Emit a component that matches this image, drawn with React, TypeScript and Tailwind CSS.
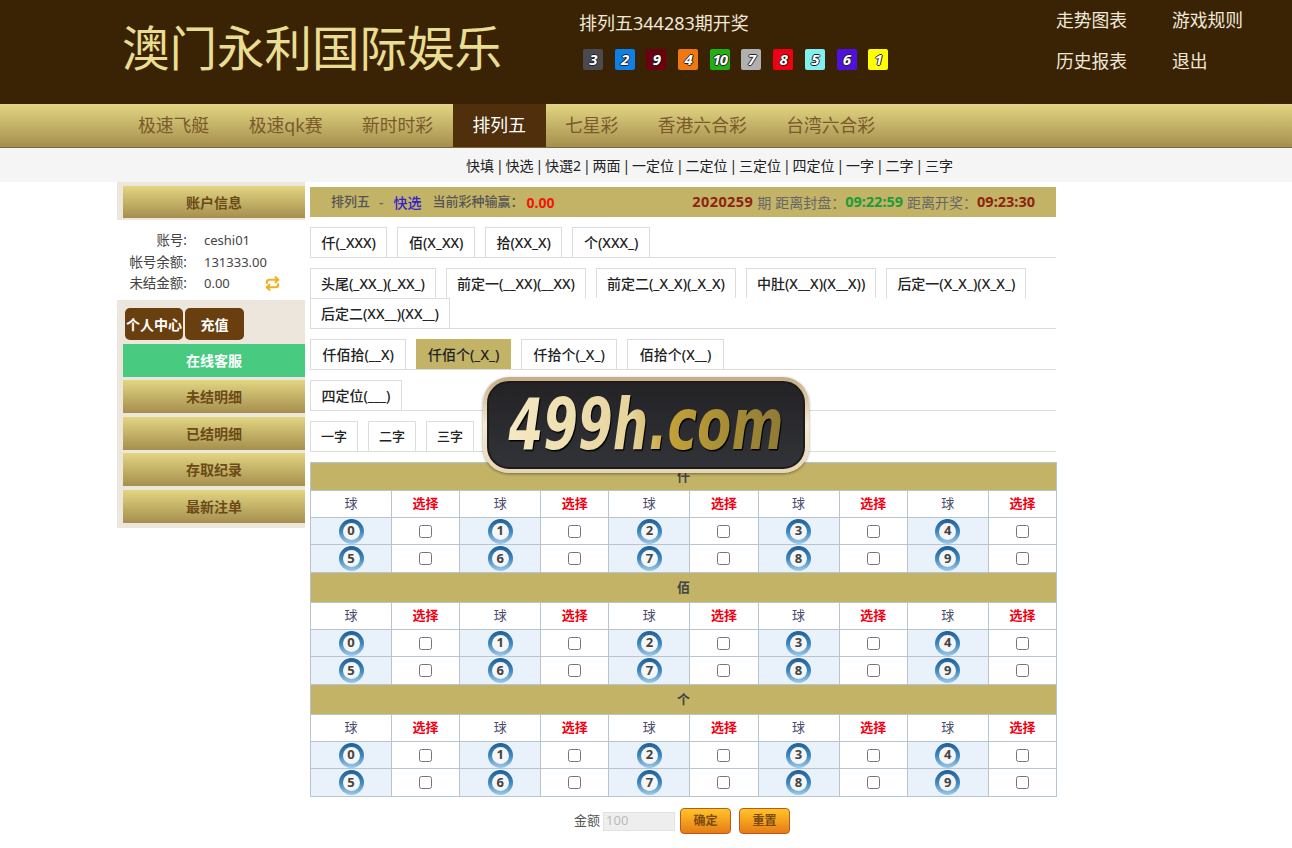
import { Fragment } from "react";
import { Repeat } from "lucide-react";

const chips = [
  { n: 3, c: "bg-[#4a4a50]" },
  { n: 2, c: "bg-[#0a80e8]" },
  { n: 9, c: "bg-[#6a0010]" },
  { n: 4, c: "bg-[#f07810]" },
  { n: 10, c: "bg-[#20b010]" },
  { n: 7, c: "bg-[#b0b0b0]" },
  { n: 8, c: "bg-[#f00010]" },
  { n: 5, c: "bg-[#80f0f0]" },
  { n: 6, c: "bg-[#5010e0]" },
  { n: 1, c: "bg-[#ffff00]" },
];

const navItems = ["极速飞艇", "极速qk赛", "新时时彩", "排列五", "七星彩", "香港六合彩", "台湾六合彩"];
const subNav = ["快填", "快选", "快選2", "两面", "一定位", "二定位", "三定位", "四定位", "一字", "二字", "三字"];
const sideGold = ["未结明细", "已结明细", "存取纪录", "最新注单"];

const tabGroups = [
  { cls: "px-[10.5px] text-[14px]", tabs: ["仟(_XXX)", "佰(X_XX)", "拾(XX_X)", "个(XXX_)"] },
  { cls: "px-[10px] text-[14px]", tabs: ["头尾(_XX_)(_XX_)", "前定一(__XX)(__XX)", "前定二(_X_X)(_X_X)", "中肚(X__X)(X__X))", "后定一(X_X_)(X_X_)", "后定二(XX__)(XX__)"] },
  { cls: "px-[11.5px] text-[14px]", tabs: ["仟佰拾(__X)", "仟佰个(_X_)", "仟拾个(_X_)", "佰拾个(X__)"] },
  { cls: "px-[10.5px] text-[14px]", tabs: ["四定位(___)"] },
  { cls: "px-[10px] text-[13px]", tabs: ["一字", "二字", "三字"] },
];

const gold = "bg-gradient-to-b from-[#e2d682] to-[#a68f4e]";

function Ball({ n }: { n: number }) {
  return (
    <div className="mx-auto flex h-[25px] w-[25px] items-center justify-center rounded-full bg-gradient-to-b from-[#1f5f96] via-[#3d87bd] to-[#9ccbea]">
      <div className="flex h-[17px] w-[17px] items-center justify-center rounded-full bg-[#f6f6f6] text-[13px] font-bold text-[#444]">{n}</div>
    </div>
  );
}

function BallRow({ nums, tall }: { nums: number[]; tall?: boolean }) {
  return (
    <tr className={tall ? "h-[28px]" : "h-[27px]"}>
      {nums.map((n) => (
        <Fragment key={n}>
          <td className="border border-[#b9c4d1] bg-[#e9f1fb] p-0">
            <Ball n={n} />
          </td>
          <td className="border border-[#b9c4d1] bg-white p-0 text-center">
            <input type="checkbox" className="mx-auto block" />
          </td>
        </Fragment>
      ))}
    </tr>
  );
}

function Section({ title, first }: { title: string; first?: boolean }) {
  return (
    <>
      <tr className={first ? "h-[28px]" : "h-[30px]"}>
        <td colSpan={10} className="border border-[#b9c4d1] bg-[#c2b366] p-0 text-center text-[13px] font-bold text-[#444]">
          {title}
        </td>
      </tr>
      <tr className="h-[27px]">
        {[0, 1, 2, 3, 4].map((i) => (
          <Fragment key={i}>
            <td className="border border-[#b9c4d1] bg-white p-0 text-center text-[13px] text-[#4a4a6a]">球</td>
            <td className="border border-[#b9c4d1] bg-white p-0 text-center text-[13px] font-bold text-[#f00010]">选择</td>
          </Fragment>
        ))}
      </tr>
      <BallRow nums={[0, 1, 2, 3, 4]} />
      <BallRow nums={[5, 6, 7, 8, 9]} tall />
    </>
  );
}

export default function App() {
  return (
    <div className="relative min-h-[848px] bg-white font-['Noto_Sans','Noto_Sans_CJK_SC',sans-serif] text-[#333]">
      {/* 顶部 */}
      <header className="flex h-[104px] bg-[#3a2305]">
        <h1 className="ml-[122px] mt-[16px] w-[457px] text-[47.5px] leading-[64px] font-normal text-[#e9dd92]">澳门永利国际娱乐</h1>
        <div className="w-[477px] pt-[10px]">
          <p className="text-[18px] leading-[26px] text-[#efe8d8]">排列五344283期开奖</p>
          <div className="mt-[13px] ml-[4px] flex gap-[11.7px]">
            {chips.map((c) => (
              <span
                key={c.n}
                className={`${c.c} flex h-[21px] w-[20px] items-center justify-center rounded-[2px] text-[15px] font-bold italic tracking-[-1px] text-white [text-shadow:-1px_0_#222,1px_0_#222,0_-1px_#222,0_1px_#222]`}
              >
                {c.n}
              </span>
            ))}
          </div>
        </div>
        <div className="grid h-fit grid-cols-[116px_auto] gap-y-[15px] pt-[7px] text-[17.8px] leading-[26px] text-[#efe8d8]">
          <span>走势图表</span>
          <span>游戏规则</span>
          <span>历史报表</span>
          <span>退出</span>
        </div>
      </header>

      {/* 彩种导航 */}
      <nav className={`flex h-[44px] border-b border-[#7d6738] pl-[118px] text-[17.8px] ${gold}`}>
        {navItems.map((item) => (
          <a
            key={item}
            className={
              item === "排列五"
                ? "mr-[-1px] flex items-center bg-[#4f2f0c] px-5 text-white"
                : "mr-[-0.5px] flex items-center px-5 text-[#7a5a2a]"
            }
          >
            {item}
          </a>
        ))}
      </nav>

      <div className="flex h-[34px] items-center bg-[#f5f5f5] pl-[466px] text-[14px] text-[#222]">
        {subNav.map((item, i) => (
          <Fragment key={item}>
            {i > 0 && <span className="mx-[1.9px]">|</span>}
            <span>{item}</span>
          </Fragment>
        ))}
      </div>

      <div className="flex pl-[117px]">
        {/* 左侧 */}
        <aside className="w-[188px] shrink-0">
          <div className="bg-[#ece6dd] pt-[4px] pb-[2px] pl-[6px]">
            <div className={`flex h-[32px] items-center justify-center text-[14px] font-bold text-[#6b4a18] ${gold}`}>账户信息</div>
          </div>
          <div className="h-[80px] pt-[10px] text-[13px] leading-[21.5px] text-[#444]">
            <div className="flex">
              <span className="w-[70px] text-right text-[13.5px]">账号:</span>
              <span className="ml-[17px]">ceshi01</span>
            </div>
            <div className="flex">
              <span className="w-[70px] text-right text-[13.5px]">帐号余额:</span>
              <span className="ml-[17px]">131333.00</span>
            </div>
            <div className="flex items-center">
              <span className="w-[70px] text-right text-[13.5px]">未结金额:</span>
              <span className="ml-[17px]">0.00</span>
              <Repeat className="ml-[35px] h-[15px] w-[15px] text-[#f0b020]" strokeWidth={3.5} />
            </div>
          </div>
          <div className="h-[228px] bg-[#ece6dd] pl-[6px] pt-[8px]">
            <div className="flex gap-[2px] pl-[2px]">
              <div className="flex h-[32px] w-[58px] items-center justify-center rounded-[5px] bg-[#693f10] text-[14px] font-bold text-white">个人中心</div>
              <div className="flex h-[32px] w-[59px] items-center justify-center rounded-[5px] bg-[#693f10] text-[14px] font-bold text-white">充值</div>
            </div>
            <div className="mt-[4px] flex h-[33px] items-center justify-center bg-[#48cb80] text-[14px] font-bold text-white">在线客服</div>
            <div className="mt-[3px] flex flex-col gap-[3.6px]">
              {sideGold.map((item) => (
                <div key={item} className={`flex h-[33px] items-center justify-center text-[14px] font-bold text-[#6b4a18] ${gold}`}>
                  {item}
                </div>
              ))}
            </div>
          </div>
        </aside>

        {/* 主区 */}
        <main className="ml-[5px] w-[747px] pt-[5px]">
          <div className="flex h-[30px] w-[746px] items-center justify-between bg-[#c2b366] px-[21px] text-[14px] text-[#666]">
            <div className="flex items-center font-medium">
              <span className="text-[13px] text-[#555]">排列五</span>
              <span className="mx-[9px]">-</span>
              <span className="ml-px text-[#3322cc]">快选</span>
              <span className="ml-[11px] text-[13px] text-[#555]">当前彩种输赢：</span>
              <span className="ml-[3px] font-bold text-[#f01808]">0.00</span>
            </div>
            <div className="flex items-center">
              <span className="text-[14.5px] font-bold tracking-[0.4px] text-[#8e2410]">2020259</span>
              <span className="ml-[4px]">期</span>
              <span className="ml-[4px]">距离封盘：</span>
              <span className="text-[14.5px] font-bold text-[#1f9a3a]">09:22:59</span>
              <span className="ml-[4px]">距离开奖：</span>
              <span className="text-[14.5px] font-bold text-[#8e2410]">09:23:30</span>
            </div>
          </div>

          <div className="mt-[10px] flex flex-col gap-[10px]">
            {tabGroups.map((group, gi) => (
              <div key={gi} className="flex w-[746px] flex-wrap gap-x-[10px] border-b border-[#dcdcdc]">
                {group.tabs.map((tab) => (
                  <button
                    key={tab}
                    type="button"
                    className={
                      tab === "仟佰个(_X_)"
                        ? `h-[30px] bg-[#c2b366] font-medium text-[#222] ${group.cls}`
                        : `h-[30px] border border-b-0 border-[#dcdcdc] bg-white font-medium text-[#222] ${group.cls}`
                    }
                  >
                    {tab}
                  </button>
                ))}
              </div>
            ))}
          </div>

          <table className="mt-[10px] w-[746px] table-fixed border-collapse">
            <colgroup>
              {[0, 1, 2, 3, 4].map((i) => (
                <Fragment key={i}>
                  <col className="w-[81px]" />
                  <col className="w-[68.2px]" />
                </Fragment>
              ))}
            </colgroup>
            <tbody>
              <Section title="仟" first />
              <Section title="佰" />
              <Section title="个" />
            </tbody>
          </table>

          <div className="mt-[11px] flex items-center pl-[264px]">
            <span className="text-[13px] text-[#555]">金额</span>
            <input
              disabled
              placeholder="100"
              className="ml-[3px] h-[19px] w-[72px] border border-[#e2e2e2] bg-[#eeeeee] pl-[2px] text-[13px] placeholder:text-[#bbb]"
            />
            <button type="button" className="ml-[5px] h-[26px] w-[51px] rounded-[4px] border border-[#b85a20] bg-gradient-to-b from-[#ffc428] to-[#e57c14] text-[12px] font-bold text-[#7a4a10]">
              确定
            </button>
            <button type="button" className="ml-[8px] h-[26px] w-[51px] rounded-[4px] border border-[#b85a20] bg-gradient-to-b from-[#ffc428] to-[#e57c14] text-[12px] font-bold text-[#7a4a10]">
              重置
            </button>
          </div>
        </main>
      </div>

      {/* 水印 */}
      <div className="absolute left-[483px] top-[377px] h-[96px] w-[326px] rounded-[26px] bg-gradient-to-b from-[#c4ad84] via-[#f6ead2] to-[#e8d6b2] p-[4px] shadow-[0_1px_3px_rgba(0,0,0,0.4)]">
        <div className="flex h-full w-full items-center justify-center rounded-[22px] border-2 border-[#1c1c1e] bg-gradient-to-b from-[#232326] to-[#323338]">
          <span className="origin-center scale-y-[1.42] bg-[linear-gradient(90deg,#f5e9c4_0%,#e6d49c_45%,#c4a23a_58%,#a68c35_80%,#8f7a35_100%)] bg-clip-text font-['DejaVu_Sans',sans-serif] text-[50px] leading-[56px] font-bold italic text-transparent drop-shadow-[1px_1px_0_#000]">
            499h.com
          </span>
        </div>
      </div>
    </div>
  );
}
